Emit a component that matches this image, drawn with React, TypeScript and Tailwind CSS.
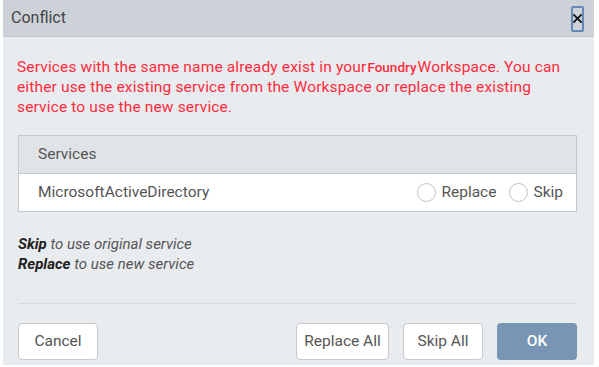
import React, { useState } from 'react';

type Choice = 'replace' | 'skip' | null;

const Radio = ({ label, checked, onClick }: { label: string; checked: boolean; onClick: () => void }) => (
    <label onClick={onClick} className="flex items-center gap-[5px] cursor-pointer">
        <span className="w-[19px] h-[19px] rounded-full border border-[#bfc3c8] bg-white flex items-center justify-center">
            {checked && <span className="w-[9px] h-[9px] rounded-full bg-[#7896b4]" />}
        </span>
        <span className="text-[15.5px] text-[#555]">{label}</span>
    </label>
);

const App = () => {
    const [choice, setChoice] = useState<Choice>(null);

    return (
        <div className="w-[599px] h-[367px] bg-white font-['Roboto',sans-serif]">
            <div className="ml-[3px] w-[591px] h-[365px] bg-[#e9ecef] flex flex-col">
                <div className="h-[37px] bg-[#cdd2d9] border-b border-[#c3c8cf] flex items-center justify-between pl-[8px] pr-[10px]">
                    <span className="text-[16px] text-[#444]">Conflict</span>
                    <button className="w-[13px] h-[26px] border-2 border-[#6688b8] rounded-[2px] flex items-center justify-center mt-[1px]">
                        <svg width="11" height="13" viewBox="0 0 11 13">
                            <path d="M0.5 1.5 L10.5 11.5 M10.5 1.5 L0.5 11.5" stroke="#111" strokeWidth="2.2" />
                        </svg>
                    </button>
                </div>

                <div className="flex-1 flex flex-col pl-[14px] pr-[17px] pt-[20px]">
                    <p className="text-[15.5px] leading-[20px] tracking-[0.15px] text-[#ff2b3d]">
                        Services with the same name already exist in your<span className="text-[13.5px] font-medium tracking-normal mx-[1px]">Foundry</span>Workspace. You can either use the existing service from the Workspace or replace the existing service to use the new service.
                    </p>

                    <div className="mt-[18px] ml-[1px] border border-[#c6c9cd] bg-white">
                        <div className="h-[38px] bg-[#e1e4e7] border-b border-[#c6c9cd] flex items-center px-[19px] text-[15.5px] text-[#555]">
                            Services
                        </div>
                        <div className="h-[37px] flex items-center justify-between pl-[19px] pr-[13px]">
                            <span className="text-[15.5px] text-[#555]">MicrosoftActiveDirectory</span>
                            <div className="flex items-center gap-[13px]">
                                <Radio label="Replace" checked={choice === 'replace'} onClick={() => setChoice('replace')} />
                                <Radio label="Skip" checked={choice === 'skip'} onClick={() => setChoice('skip')} />
                            </div>
                        </div>
                    </div>

                    <div className="mt-[22px] ml-[1px] text-[15px] leading-[20px] italic text-[#555]">
                        <div><b className="text-[#222]">Skip</b> to use original service</div>
                        <div><b className="text-[#222]">Replace</b> to use new service</div>
                    </div>

                    <div className="mt-[29px] ml-[1px] border-t border-[#d6d9dd]" />

                    <div className="mt-[19px] ml-[1px] flex items-center">
                        <button className="w-[80px] h-[37px] bg-white border border-[#c6c9cd] rounded-[4px] text-[15.5px] text-[#555]">Cancel</button>
                        <div className="ml-auto flex items-center gap-[14px]">
                            <button className="w-[93px] h-[37px] bg-white border border-[#c6c9cd] rounded-[4px] text-[15.5px] text-[#555]">Replace All</button>
                            <button className="w-[80px] h-[37px] bg-white border border-[#c6c9cd] rounded-[4px] text-[15.5px] text-[#555]">Skip All</button>
                            <button className="w-[80px] h-[37px] bg-[#7896b4] rounded-[4px] text-[15.5px] font-medium text-white">OK</button>
                        </div>
                    </div>
                </div>
            </div>
        </div>
    );
};

export default App;
